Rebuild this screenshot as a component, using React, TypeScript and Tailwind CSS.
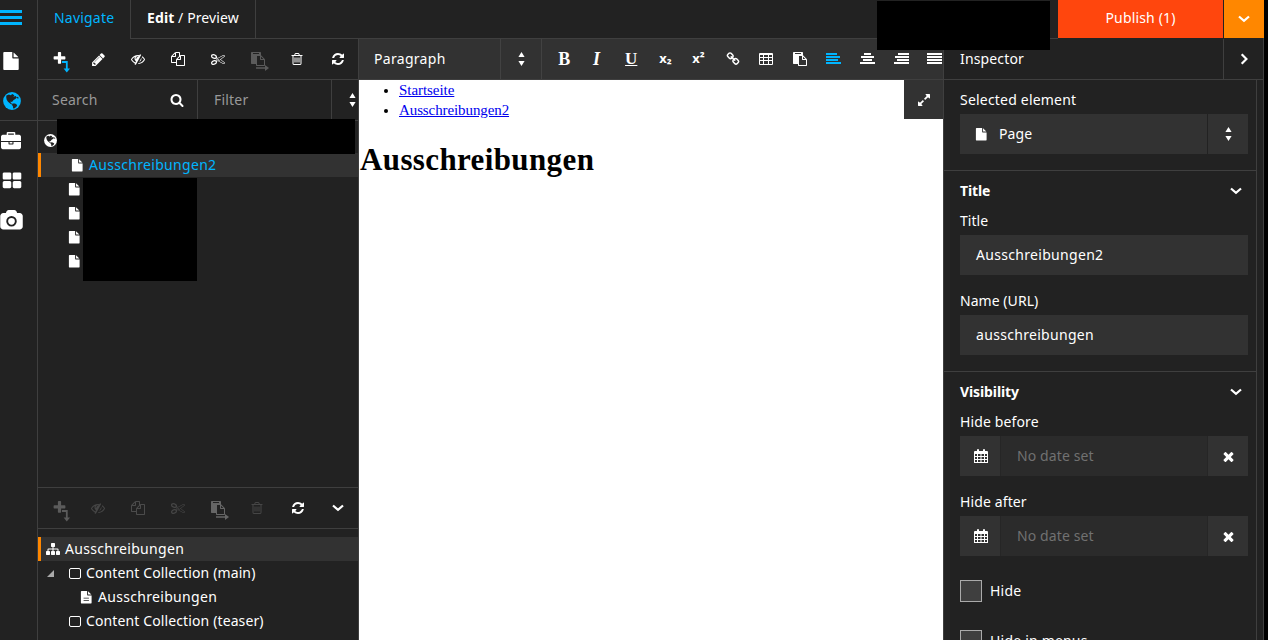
import React from "react";

const FA = {
  plus: "M1600 736v192q0 40-28 68t-68 28h-416v416q0 40-28 68t-68 28h-192q-40 0-68-28t-28-68v-416h-416q-40 0-68-28t-28-68v-192q0-40 28-68t68-28h416v-416q0-40 28-68t68-28h192q40 0 68 28t28 68v416h416q40 0 68 28t28 68z",
  trash: "M704 736v576q0 14-9 23t-23 9h-64q-14 0-23-9t-9-23v-576q0-14 9-23t23-9h64q14 0 23 9t9 23zm256 0v576q0 14-9 23t-23 9h-64q-14 0-23-9t-9-23v-576q0-14 9-23t23-9h64q14 0 23 9t9 23zm256 0v576q0 14-9 23t-23 9h-64q-14 0-23-9t-9-23v-576q0-14 9-23t23-9h64q14 0 23 9t9 23zm128 724v-948h-896v948q0 22 7 40.5t14.5 27 10.5 8.5h832q3 0 10.5-8.5t14.5-27 7-40.5zm-672-1076h448l-48-117q-7-9-17-11h-317q-10 2-17 11zm928 32v64q0 14-9 23t-23 9h-96v948q0 83-47 143.5t-113 60.5h-832q-66 0-113-58.5t-47-141.5v-952h-96q-14 0-23-9t-9-23v-64q0-14 9-23t23-9h309l70-167q15-37 54-63t79-26h320q40 0 79 26t54 63l70 167h309q14 0 23 9t9 23z",
  pencil: "M491 1536l91-91-235-235-91 91v107h128v128h107zm523-928q0-22-22-22-10 0-17 7l-542 542q-7 7-7 17 0 22 22 22 10 0 17-7l542-542q7-7 7-17zm-54-192l416 416-832 832h-416v-416zm683 96q0 53-37 90l-166 166-416-416 166-165q36-38 90-38 53 0 91 38l235 234q37 39 37 91z",
  search: "M1216 832q0-185-131.5-316.5t-316.5-131.5-316.5 131.5-131.5 316.5 131.5 316.5 316.5 131.5 316.5-131.5 131.5-316.5zm512 832q0 52-38 90t-90 38q-54 0-90-38l-343-342q-179 124-399 124-143 0-273.5-55.5t-225-150-150-225-55.5-273.5 55.5-273.5 150-225 225-150 273.5-55.5 273.5 55.5 225 150 150 225 55.5 273.5q0 220-124 399l343 343q37 37 37 90z",
  refresh: "M1639 1056q0 5-1 7-64 268-268 434.5t-478 166.5q-146 0-282.5-55t-243.5-157l-129 129q-19 19-45 19t-45-19-19-45v-448q0-26 19-45t45-19h448q26 0 45 19t19 45-19 45l-137 137q71 66 161 102t187 36q134 0 250-65t186-179q11-17 53-117 8-23 30-23h192q13 0 22.5 9.5t9.5 22.5zm25-800v448q0 26-19 45t-45 19h-448q-26 0-45-19t-19-45 19-45l138-138q-148-137-349-137-134 0-250 65t-186 179q-11 17-53 117-8 23-30 23h-199q-13 0-22.5-9.5t-9.5-22.5v-7q65-268 270-434.5t480-166.5q146 0 284 55.5t245 156.5l130-129q19-19 45-19t45 19 19 45z",
  copy: "M1696 384q40 0 68 28t28 68v1216q0 40-28 68t-68 28h-960q-40 0-68-28t-28-68v-288h-544q-40 0-68-28t-28-68v-672q0-40 20-88t48-76l408-408q28-28 76-48t88-20h416q40 0 68 28t28 68v328q68-40 128-40h416zm-544 213l-299 299h299v-299zm-640-384l-299 299h299v-299zm196 647l316-316v-416h-384v416q0 40-28 68t-68 28h-416v640h512v-256q0-40 20-88t48-76zm956 804v-1152h-384v416q0 40-28 68t-68 28h-416v640h896z",
  paste: "M768 1664h896v-640h-416q-40 0-68-28t-28-68v-416h-384v1152zm256-1440v-64q0-13-9.5-22.5t-22.5-9.5h-704q-13 0-22.5 9.5t-9.5 22.5v64q0 13 9.5 22.5t22.5 9.5h704q13 0 22.5-9.5t9.5-22.5zm256 672h299l-299-299v299zm512 128v672q0 40-28 68t-68 28h-960q-40 0-68-28t-28-68v-160h-544q-40 0-68-28t-28-68v-1344q0-40 28-68t68-28h1088q40 0 68 28t28 68v328q21 13 36 28l408 408q28 28 48 76t20 88z",
  file: "M1152 512v-472q22 14 36 28l408 408q14 14 28 36h-472zm-128 32q0 40 28 68t68 28h544v1056q0 40-28 68t-68 28h-1344q-40 0-68-28t-28-68v-1600q0-40 28-68t68-28h800v544z",
  fileText: "M1596 476q14 14 28 36h-472v-472q22 14 36 28zm-476 164h544v1056q0 40-28 68t-68 28h-1344q-40 0-68-28t-28-68v-1600q0-40 28-68t68-28h800v544q0 40 28 68t68 28zm160 768v-128h-768v128zm0-320v-128h-768v128z",
  eyeSlash: "M555 1335l78-141q-87-63-136-159t-49-203q0-121 61-225-229 117-381 353 167 258 427 375zm389-759q0-20-14-34t-34-14q-125 0-214.5 89.5t-89.5 214.5q0 20 14 34t34 14 34-14 14-34q0-86 61-147t147-61q20 0 34-14t14-34zm363-191q0 7-1 9-106 189-316 567t-315 566l-49 89q-10 16-28 16-12 0-134-70-16-10-16-28 0-12 44-87-143-65-263.5-173t-208.5-245q-20-31-20-69t20-69q153-235 380-371t496-136q89 0 180 17l54-97q10-16 28-16 5 0 18 6t31 15.5 33 18.5 31.5 18.5 19.5 11.5q16 10 16 27zm37 447q0 139-79 253.5t-209 164.5l280-502q8 45 8 84zm448 128q0 35-20 69-39 64-109 145-150 172-347.5 267t-419.5 95l74-132q212-18 392.5-137t301.5-307q-115-179-282-294l63-112q95 64 182.5 153t144.5 184q20 34 20 69z",
  cut: "M960 896q26 0 45 19t19 45-19 45-45 19-45-19-19-45 19-45 45-19zm300 64l507 398q28 20 25 56-5 35-35 51l-128 64q-13 7-29 7-17 0-31-8l-690-387-110 66q-8 4-12 5 14 49 10 97-7 77-56 147.5t-132 123.5q-132 84-277 84-136 0-222-78-90-84-79-207 7-76 56-147t131-124q132-84 278-84 83 0 151 31 9-13 22-22l122-73-122-73q-13-9-22-22-68 31-151 31-146 0-278-84-82-53-131-124t-56-147q-5-59 15.5-113t63.5-93q85-79 222-79 145 0 277 84 83 52 132 123t56 148q4 48-10 97 4 1 12 5l110 66 690-387q14-8 31-8 16 0 29 7l128 64q30 16 35 51 3 36-25 56zm-681-260q46-42 21-108t-106-117q-92-59-192-59-74 0-113 36-46 42-21 108t106 117q92 59 192 59 74 0 113-36zm-85 745q81-51 106-117t-21-108q-39-36-113-36-100 0-192 59-81 51-106 117t21 108q39 36 113 36 100 0 192-59zm178-613l96 58v-11q0-36 33-56l14-8-79-44-26 26q-3 3-10 11t-12 12q-2 2-4 3.5t-3 2.5zm224 224l96 32 736-576-128-64-768 431v113l-160 96 9 8q2 2 7 6 4 4 11 12t11 12l26 26zm704 416l128-64-520-408-177 138q-2 3-13 7z",
  briefcase: "M640 256h512v-128h-512v128zm1152 640v480q0 66-47 113t-113 47h-1472q-66 0-113-47t-47-113v-480h672v160q0 26 19 45t45 19h320q26 0 45-19t19-45v-160h672zm-768 0v128h-256v-128h256zm768-480v384h-1792v-384q0-66 47-113t113-47h352v-160q0-40 28-68t68-28h576q40 0 68 28t28 68v160h352q66 0 113 47t47 113z",
  thLarge: "M832 1024v384q0 52-38 90t-90 38h-512q-52 0-90-38t-38-90v-384q0-52 38-90t90-38h512q52 0 90 38t38 90zm0-768v384q0 52-38 90t-90 38h-512q-52 0-90-38t-38-90v-384q0-52 38-90t90-38h512q52 0 90 38t38 90zm896 768v384q0 52-38 90t-90 38h-512q-52 0-90-38t-38-90v-384q0-52 38-90t90-38h512q52 0 90 38t38 90zm0-768v384q0 52-38 90t-90 38h-512q-52 0-90-38t-38-90v-384q0-52 38-90t90-38h512q52 0 90 38t38 90z",
  camera: "M896 672q119 0 203.5 84.5t84.5 203.5-84.5 203.5-203.5 84.5-203.5-84.5-84.5-203.5 84.5-203.5 203.5-84.5zm704-416q106 0 181 75t75 181v896q0 106-75 181t-181 75h-1408q-106 0-181-75t-75-181v-896q0-106 75-181t181-75h224l51-136q19-49 69.5-84.5t103.5-35.5h512q53 0 103.5 35.5t69.5 84.5l51 136h224zm-704 1152q185 0 316.5-131.5t131.5-316.5-131.5-316.5-316.5-131.5-316.5 131.5-131.5 316.5 131.5 316.5 316.5 131.5z",
  link: "M1520 1216q0-40-28-68l-208-208q-28-28-68-28-42 0-72 32 3 3 19 18.5t21.5 21.5 15 19 13 25.5 3.5 27.5q0 40-28 68t-68 28q-15 0-27.5-3.5t-25.5-13-19-15-21.5-21.5-18.5-19q-33 31-33 73 0 40 28 68l206 207q27 27 68 27 40 0 68-26l147-146q28-28 28-67zm-703-705q0-40-28-68l-206-207q-28-28-68-28-39 0-68 27l-147 146q-28 28-28 67 0 40 28 68l208 208q27 27 68 27 42 0 72-31-3-3-19-18.5t-21.5-21.5-15-19-13-25.5-3.5-27.5q0-40 28-68t68-28q15 0 27.5 3.5t25.5 13 19 15 21.5 21.5 18.5 19q33-31 33-73zm895 705q0 120-85 203l-147 146q-83 83-203 83-121 0-204-85l-206-207q-83-83-83-203 0-123 88-209l-88-88q-86 88-208 88-120 0-204-84l-208-208q-84-84-84-204t85-203l147-146q83-83 203-83 121 0 204 85l206 207q83 83 83 203 0 123-88 209l88 88q86-88 208-88 120 0 204 84l208 208q84 84 84 204z",
  times: "M1490 1322q0 40-28 68l-136 136q-28 28-68 28t-68-28l-294-294-294 294q-28 28-68 28t-68-28l-136-136q-28-28-28-68t28-68l294-294-294-294q-28-28-28-68t28-68l136-136q28-28 68-28t68 28l294 294 294-294q28-28 68-28t68 28l136 136q28 28 28 68t-28 68l-294 294 294 294q28 28 28 68z",
  sitemap: "M1792 1248v320q0 40-28 68t-68 28h-320q-40 0-68-28t-28-68v-320q0-40 28-68t68-28h96v-192h-512v192h96q40 0 68 28t28 68v320q0 40-28 68t-68 28h-320q-40 0-68-28t-28-68v-320q0-40 28-68t68-28h96v-192h-512v192h96q40 0 68 28t28 68v320q0 40-28 68t-68 28h-320q-40 0-68-28t-28-68v-320q0-40 28-68t68-28h96v-192q0-52 38-90t90-38h512v-192h-96q-40 0-68-28t-28-68v-320q0-40 28-68t68-28h320q40 0 68 28t28 68v320q0 40-28 68t-68 28h-96v192h512q52 0 90 38t38 90v192h96q40 0 68 28t28 68z",
  expand: "M883 1056q0 13-10 23l-332 332 144 144q19 19 19 45t-19 45-45 19h-448q-26 0-45-19t-19-45v-448q0-26 19-45t45-19 45 19l144 144 332-332q10-10 23-10t23 10l114 114q10 10 10 23zm781-864v448q0 26-19 45t-45 19-45-19l-144-144-332 332q-10 10-23 10t-23-10l-114-114q-10-10-10-23t10-23l332-332-144-144q-19-19-19-45t19-45 45-19h448q26 0 45 19t19 45z",
};

function Icon({ name, size = 14, className = "" }: { name: keyof typeof FA; size?: number; className?: string }) {
  return (
    <svg width={size} height={size} viewBox="0 0 1792 1792" fill="currentColor" fillRule="evenodd" className={"shrink-0 overflow-visible " + className}>
      <path d={FA[name]} />
    </svg>
  );
}

function Globe({ size }: { size: number }) {
  return (
    <svg width={size} height={size} viewBox="0 0 18 18" className="shrink-0">
      <circle cx="9" cy="9" r="8.9" fill="currentColor" />
      <path d="M3.4 3.4 6 2.4l1.6.9 1.9-1.3 1.9 1.6-1.2 1.1 2.5-.6 1.2 1.4-1.6 1.4-1.7 1-1.6 2-1.5-.3.4 1.5 1.6.9.3 1-2.4-1.2L5 9.7 3.6 7.4 3.2 5z" fill="#222" />
      <path d="m9.6 11.4 2.5.2 2.1 1.4-.6 1.5-1.9 1.8-1.5.2-.3-2.3-.9-1.3zM13.8 5.2l1.2-.4.7 1.4-1 .6z" fill="#222" />
    </svg>
  );
}

function Chevron({ dir = "down" }: { dir?: "down" | "right" }) {
  return (
    <svg width="12" height="12" viewBox="0 0 12 12" fill="none" stroke="currentColor" strokeWidth="2.2" className="shrink-0">
      <path d={dir === "down" ? "M1 3.5 6 7.9l5-4.4" : "M3.7 1.2 8.4 6l-4.7 4.8"} />
    </svg>
  );
}

function Sorter() {
  return (
    <svg width="7" height="14" viewBox="0 0 7 14" fill="currentColor" className="shrink-0">
      <path d="M.4 5 3.5 0l3.1 5zM.4 9l3.1 5 3.1-5z" />
    </svg>
  );
}

function AddIcon({ arrow }: { arrow: string }) {
  return (
    <span className="relative -left-[2px] -top-[0.5px] flex">
      <Icon name="plus" size={15} />
      <svg width="9" height="12" viewBox="0 0 9 12" className={"absolute left-[10.5px] top-[9.5px] " + arrow}>
        <path d="M0 1h4.8v7" fill="none" stroke="currentColor" strokeWidth="1.8" />
        <path d="M1.6 7.5h6.4l-3.2 4z" fill="currentColor" />
      </svg>
    </span>
  );
}

function PasteInto() {
  return (
    <span className="relative flex">
      <Icon name="paste" size={14} />
      <svg width="13" height="6" viewBox="0 0 13 6" className="absolute left-[5px] top-[13px]">
        <path d="M0 3h9" stroke="currentColor" strokeWidth="1.5" />
        <path d="M9 0v6l4-3z" fill="currentColor" />
      </svg>
    </span>
  );
}

function Align({ rows }: { rows: number[][] }) {
  return (
    <svg width="15" height="12" viewBox="0 0 15 12" fill="currentColor" shapeRendering="crispEdges" className="shrink-0">
      {rows.map(([x, w], i) => (
        <rect key={i} x={x} y={i * 3} width={w} height="2" />
      ))}
    </svg>
  );
}

function TableIcon() {
  return (
    <svg width="14" height="12" viewBox="0 0 14 12" className="shrink-0">
      <rect width="14" height="12" rx="1" fill="currentColor" />
      <path d="M1 2h3v2H1zM5 2h4v2H5zM10 2h3v2h-3zM1 5h3v2H1zM5 5h4v2H5zM10 5h3v2h-3zM1 8h3v3H1zM5 8h4v3H5zM10 8h3v3h-3z" fill="#323232" />
    </svg>
  );
}

function Calendar() {
  return (
    <svg width="14" height="14" viewBox="0 0 14 14" className="shrink-0">
      <path d="M1 2h2V1q0-1 1-1t1 1v1h4V1q0-1 1-1t1 1v1h2q1 0 1 1v11H0V3q0-1 1-1z" fill="currentColor" />
      <path d="M1 5h2v2H1zM4 5h2.5v2H4zM7.5 5H10v2H7.5zM11 5h2v2h-2zM1 8h2v2H1zM4 8h2.5v2H4zM7.5 8H10v2H7.5zM11 8h2v2h-2zM1 11h2v2H1zM4 11h2.5v2H4zM7.5 11H10v2H7.5zM11 11h2v2h-2z" fill="#323232" />
    </svg>
  );
}

const Cell = ({ children, className = "" }: { children: React.ReactNode; className?: string }) => (
  <div className={"flex h-10 w-10 shrink-0 items-center justify-center " + className}>{children}</div>
);

const Tool = ({ children, className = "" }: { children: React.ReactNode; className?: string }) => (
  <div className={"flex w-[33.7px] shrink-0 items-center justify-center " + className}>{children}</div>
);

function DateField({ label }: { label: string }) {
  return (
    <div>
      <div className="h-6 leading-6 tracking-[0.12px]">{label}</div>
      <div className="mt-0.5 flex h-10 bg-[#323232]">
        <Cell className="pl-px"><Calendar /></Cell>
        <div className="flex-1 border-x border-[#262626] bg-[#2b2b2b] pl-4 leading-10 tracking-[0.12px] text-[#717171]">No date set</div>
        <Cell><Icon name="times" size={15} /></Cell>
      </div>
    </div>
  );
}

function TextField({ label, value }: { label: string; value: string }) {
  return (
    <div>
      <div className="h-6 leading-6 tracking-[0.05px]">{label}</div>
      <div className="mt-0.5 h-10 bg-[#323232] pl-4 leading-10 tracking-[0.31px]">{value}</div>
    </div>
  );
}

const SquareIcon = () => <span className="h-[11px] w-[12px] shrink-0 rounded-[2px] border border-white" />;

export default function App() {
  return (
    <div className="relative flex h-[640px] w-[1268px] overflow-hidden bg-black font-['Noto_Sans',sans-serif] text-[14px] text-white">
      <nav className="flex w-[37px] shrink-0 flex-col bg-[#222]">
        <div className="flex h-10 flex-col gap-[3px] pt-[10px] text-[#00b5ff]">
          <span className="h-[3px] w-[22px] bg-current" />
          <span className="h-[3px] w-[22px] bg-current" />
          <span className="h-[3px] w-[22px] bg-current" />
        </div>
        <div className="flex h-10 items-center pl-[2px] pt-px"><Icon name="file" size={18} /></div>
        <div className="flex h-10 items-center pl-[2.5px] pt-px text-[#00b5ff]"><Globe size={18} /></div>
        <div className="flex h-10 items-center border-t border-[#3f3f3f] pl-px pt-[3px]"><Icon name="briefcase" size={20} /></div>
        <div className="flex h-10 items-center pl-[1.5px] pt-[2px]"><Icon name="thLarge" size={20} /></div>
        <div className="flex h-10 items-center pl-[1px] pt-px"><Icon name="camera" size={21} /></div>
      </nav>

      <div className="flex w-[1227px] shrink-0 flex-col border-x border-[#3f3f3f] bg-[#222]">
        <header className="-mr-px flex h-[39px] shrink-0">
          <div className="w-[93px] shrink-0 border-r border-[#3f3f3f] pl-4 leading-[36px] tracking-[0.2px] text-[#00b5ff]">Navigate</div>
          <div className="w-[125px] shrink-0 border-r border-b border-[#3f3f3f] pl-4 leading-[36px] tracking-[0.1px]"><b className="font-bold">Edit</b> / Preview</div>
          <div className="flex-1 border-b border-[#3f3f3f]" />
          <div className="mr-px h-[38px] w-[165px] shrink-0 bg-[#ff460d] text-center leading-[36px] tracking-[0.15px]">Publish (1)</div>
          <div className="flex h-[38px] w-[40px] shrink-0 items-center justify-center bg-[#ff8700]"><Chevron /></div>
        </header>

        <div className="flex min-h-0 flex-1">
          <aside className="flex w-[321px] shrink-0 flex-col border-r border-[#3f3f3f]">
            <div className="flex h-10 shrink-0 pl-[3px]">
              <Cell><AddIcon arrow="text-[#00b5ff]" /></Cell>
              <Cell className="-ml-[3px]"><Icon name="pencil" size={15} /></Cell>
              <Cell><Icon name="eyeSlash" /></Cell>
              <Cell><Icon name="copy" /></Cell>
              <Cell><Icon name="cut" /></Cell>
              <Cell className="text-[#5b5b5b]"><PasteInto /></Cell>
              <Cell className="-ml-px"><Icon name="trash" /></Cell>
              <Cell className="ml-px"><Icon name="refresh" /></Cell>
            </div>
            <div className="flex h-[42px] shrink-0 items-stretch border-y border-[#3f3f3f] text-[#999]">
              <div className="flex w-[160px] items-center justify-between border-r border-[#3f3f3f] pl-[14px] pr-[13px]">
                <span className="-mt-px tracking-[0.2px]">Search</span><Icon name="search" className="text-white" />
              </div>
              <div className="flex w-[134px] items-center border-r border-[#3f3f3f] pb-px pl-4 tracking-[0.2px]">Filter</div>
              <div className="flex items-center pl-[17px] text-white"><Sorter /></div>
            </div>
            <div className="h-[366px] shrink-0">
              <div className="flex h-8 items-center pl-[6px] pt-[7px]"><Globe size={13} /></div>
              <div className="flex h-6 items-center border-l-[3px] border-[#ff8700] bg-[#323232] pl-[30px] text-[#00b5ff]">
                <Icon name="file" size={12.5} className="text-white" /><span className="-mt-[2px] ml-[5.5px] tracking-[0.31px]">Ausschreibungen2</span>
              </div>
              {[1, 2, 3, 4].map((n) => (
                <div key={n} className="flex h-6 items-center pl-[30px]"><Icon name="file" size={12.5} /></div>
              ))}
            </div>
            <div className="flex h-[42px] shrink-0 items-center border-y border-[#3f3f3f] pl-[3px] text-[#5b5b5b]">
              <Cell><AddIcon arrow="" /></Cell>
              <Cell className="-ml-[3px] text-[#464646]"><Icon name="eyeSlash" /></Cell>
              <Cell className="text-[#4b4b4b]"><Icon name="copy" /></Cell>
              <Cell className="text-[#464646]"><Icon name="cut" /></Cell>
              <Cell className="text-[#666]"><PasteInto /></Cell>
              <Cell className="-ml-px text-[#464646]"><Icon name="trash" /></Cell>
              <Cell className="ml-px text-white"><Icon name="refresh" /></Cell>
              <Cell className="text-white"><Chevron /></Cell>
            </div>
            <div className="pt-2">
              <div className="flex h-6 items-center border-l-[3px] border-[#ff8700] bg-[#323232] pl-[5px]">
                <Icon name="sitemap" /><span className="-mt-[2px] ml-[5px] tracking-[0.31px]">Ausschreibungen</span>
              </div>
              <div className="flex h-6 items-center pl-[9px]">
                <svg width="7" height="7" viewBox="0 0 7 7" className="mr-[15px]"><path d="M7 0v7H0z" fill="#aaa" /></svg>
                <SquareIcon /><span className="-mt-[2px] ml-[5px] tracking-[0.12px]">Content Collection (main)</span>
              </div>
              <div className="flex h-6 items-center pl-[42px]">
                <Icon name="fileText" size={12.5} /><span className="-mt-[2px] ml-[5.5px] tracking-[0.31px]">Ausschreibungen</span>
              </div>
              <div className="flex h-6 items-center pl-[31px]"><SquareIcon /><span className="-mt-[2px] ml-[5px] tracking-[0.12px]">Content Collection (teaser)</span></div>
            </div>
          </aside>

          <main className="flex w-[584px] shrink-0 flex-col bg-white">
            <div className="flex h-[41px] shrink-0 border-b border-[#3f3f3f] bg-[#323232]">
              <div className="w-[142px] shrink-0 border-r border-[#424242] pl-[15px] leading-[39px] tracking-[0.3px]">Paragraph</div>
              <div className="flex w-[41px] shrink-0 items-center justify-center border-r border-[#424242]"><Sorter /></div>
              <div className="flex min-w-0 flex-1 overflow-hidden pl-[5.5px] text-[13px] font-bold">
                <Tool className="font-['Liberation_Serif',serif] text-[18px]">B</Tool>
                <Tool className="pr-[3px] font-['Liberation_Serif',serif] text-[18px] italic">I</Tool>
                <Tool className="pr-px font-['Liberation_Serif',serif] text-[17px] underline">U</Tool>
                <Tool>x₂</Tool>
                <Tool className="pr-px">x²</Tool>
                <Tool><Icon name="link" /></Tool>
                <Tool><TableIcon /></Tool>
                <Tool><Icon name="paste" /></Tool>
                <Tool className="text-[#00b5ff]"><Align rows={[[0, 11], [0, 14], [0, 12], [0, 15]]} /></Tool>
                <Tool><Align rows={[[4, 7], [1, 13], [3, 9], [0, 15]]} /></Tool>
                <Tool><Align rows={[[4, 11], [1, 14], [3, 12], [0, 15]]} /></Tool>
                <Tool><Align rows={[[0, 15], [0, 15], [0, 15], [0, 15]]} /></Tool>
              </div>
            </div>
            <div className="relative flex-1 font-['Liberation_Serif',serif] text-black">
              <ul className="list-disc pl-10 text-[15px] leading-5 tracking-[-0.05px] text-[#0000ee]">
                <li className="marker:text-black"><a className="underline">Startseite</a></li>
                <li className="marker:text-black"><a className="underline tracking-[-0.1px]">Ausschreibungen2</a></li>
              </ul>
              <h1 className="mt-[22px] pl-px text-[31px] font-bold leading-[36px] tracking-[0.38px]">Ausschreibungen</h1>
              <div className="absolute right-0 top-0 flex h-[39px] w-[39px] items-center justify-center bg-[#323232] text-white"><Icon name="expand" /></div>
            </div>
          </main>

          <aside className="flex min-w-0 flex-1 flex-col border-l border-[#3f3f3f]">
            <div className="flex h-[41px] shrink-0 border-b border-[#3f3f3f]">
              <div className="flex-1 pl-4 leading-[40px] tracking-[0.15px]">Inspector</div>
              <div className="flex w-[40px] items-center justify-center border-l border-[#3f3f3f]"><Chevron dir="right" /></div>
            </div>
            <div className="mr-[6px] flex-1 overflow-hidden border-r border-[#3f3f3f]">
              <section className="h-[91px] border-b border-[#3f3f3f] pl-4 pr-2 pt-2">
                <div className="h-6 leading-6 tracking-[0.2px]">Selected element</div>
                <div className="mt-0.5 flex h-10 items-center bg-[#323232] pl-[15px]">
                  <Icon name="file" size={12.5} /><span className="-mt-[2px] ml-[11.5px] flex-1 tracking-[0.1px]">Page</span>
                  <Cell className="w-[41px] border-l border-[#222]"><Sorter /></Cell>
                </div>
              </section>
              <section className="h-[201px] border-b border-[#3f3f3f] pl-4 pr-2 pt-2">
                <div className="flex h-6 items-center justify-between pr-[6px] font-bold"><span className="-mt-[2px] tracking-[-0.1px]">Title</span><Chevron /></div>
                <div className="mt-1.5 flex flex-col gap-3.5">
                  <TextField label="Title" value="Ausschreibungen2" />
                  <TextField label="Name (URL)" value="ausschreibungen" />
                </div>
              </section>
              <section className="pl-4 pr-2 pt-2">
                <div className="flex h-6 items-center justify-between pr-[6px] font-bold"><span className="-mt-[2px] tracking-[-0.1px]">Visibility</span><Chevron /></div>
                <div className="mt-1.5 flex flex-col gap-3.5">
                  <DateField label="Hide before" />
                  <DateField label="Hide after" />
                </div>
                <div className="mt-6 flex flex-col gap-7">
                  {["Hide", "Hide in menus"].map((t) => (
                    <div key={t} className="flex h-[22px] items-center"><span className="mr-2 size-[22px] border border-[#aaa] bg-[#3f3f3f]" /><span className="-mt-[2px] tracking-[0.2px]">{t}</span></div>
                  ))}
                </div>
              </section>
            </div>
          </aside>
        </div>
      </div>

      <div className="absolute left-[57px] top-[119px] h-[35px] w-[298px] bg-black" />
      <div className="absolute left-[83px] top-[178px] h-[103px] w-[114px] bg-black" />
      <div className="absolute left-[877px] top-[1px] h-[49px] w-[173px] bg-black" />
    </div>
  );
}
